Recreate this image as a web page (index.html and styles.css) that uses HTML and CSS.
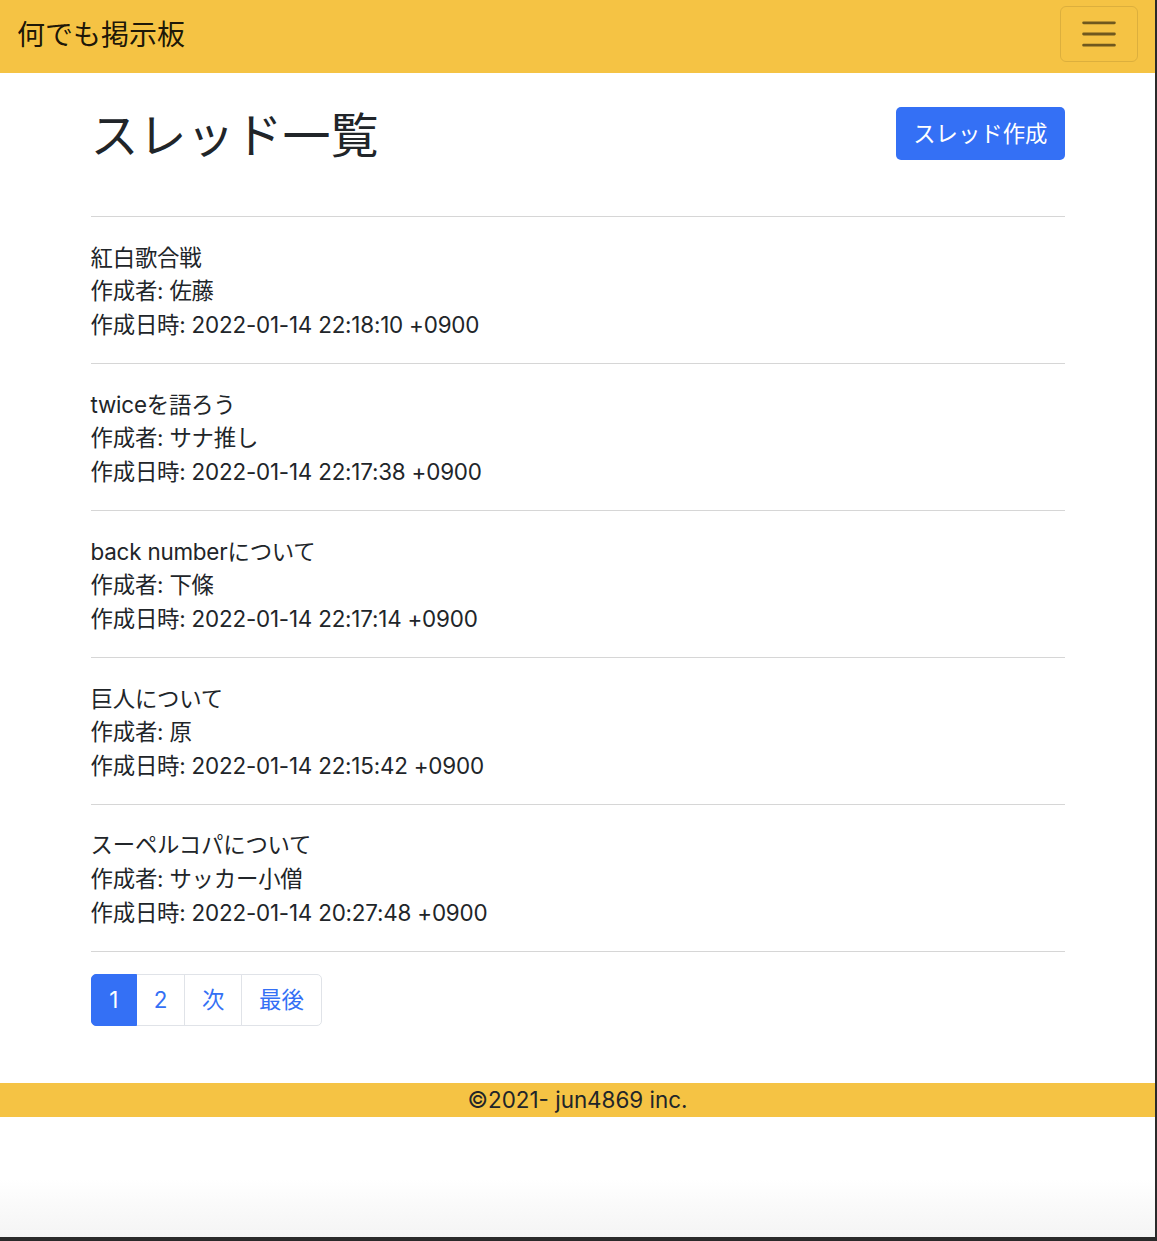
FILE: index.html
```html
<!DOCTYPE html>
<html lang="ja">
<head>
<meta charset="utf-8">
<title>何でも掲示板</title>
<link rel="stylesheet" href="styles.css">
</head>
<body>
<div class="window">
  <nav class="navbar">
    <a class="brand" href="#">何でも掲示板</a>
    <button class="toggler" type="button" aria-label="menu">
      <svg width="42" height="42" viewBox="0 0 30 30"><path d="M4 7h22M4 15h22M4 23h22" stroke="rgba(0,0,0,0.55)" stroke-width="2" stroke-linecap="round" fill="none"/></svg>
    </button>
  </nav>
  <main class="container">
    <div class="head">
      <h1 class="title">スレッド一覧</h1>
      <a class="btn" href="#">スレッド作成</a>
    </div>
    <hr class="sep">
    <div class="thread">
      <div>紅白歌合戦</div>
      <div>作成者: 佐藤</div>
      <div>作成日時: 2022-01-14 22:18:10 +0900</div>
    </div>
    <hr class="sep">
    <div class="thread">
      <div>twiceを語ろう</div>
      <div>作成者: サナ推し</div>
      <div>作成日時: 2022-01-14 22:17:38 +0900</div>
    </div>
    <hr class="sep">
    <div class="thread">
      <div>back numberについて</div>
      <div>作成者: 下條</div>
      <div>作成日時: 2022-01-14 22:17:14 +0900</div>
    </div>
    <hr class="sep">
    <div class="thread">
      <div>巨人について</div>
      <div>作成者: 原</div>
      <div>作成日時: 2022-01-14 22:15:42 +0900</div>
    </div>
    <hr class="sep">
    <div class="thread">
      <div>スーペルコパについて</div>
      <div>作成者: サッカー小僧</div>
      <div>作成日時: 2022-01-14 20:27:48 +0900</div>
    </div>
    <hr class="sep">
    <ul class="pagination">
      <li class="page active"><a href="#">1</a></li>
      <li class="page"><a href="#">2</a></li>
      <li class="page"><a href="#">次</a></li>
      <li class="page last"><a href="#">最後</a></li>
    </ul>
  </main>
  <footer class="footer">©2021- jun4869 inc.</footer>
</div>
</body>
</html>
```
FILE: styles.css
```css
html, body {
  margin: 0;
  padding: 0;
}
body {
  background: #2a2a2a;
  font-family: Inter, "Liberation Sans", "Noto Sans CJK JP", sans-serif;
  color: #212529;
}
.window {
  width: 1155px;
  height: 1237px;
  background: linear-gradient(to bottom, #ffffff 0, #ffffff 1180px, #f4f4f4 1237px);
  overflow: hidden;
}
.navbar {
  height: 73px;
  background: #f5c344;
  display: flex;
  align-items: center;
  justify-content: space-between;
  padding: 0 17px;
}
.brand {
  font-size: 28px;
  line-height: 40px;
  color: rgba(0, 0, 0, 0.9);
  text-decoration: none;
  margin-top: -4px;
}
.toggler {
  width: 78px;
  height: 56px;
  margin-top: -6px;
  background: transparent;
  border: 1.4px solid rgba(0, 0, 0, 0.1);
  border-radius: 6px;
  display: flex;
  align-items: center;
  justify-content: center;
  padding: 0;
}
.container {
  width: 974px;
  margin: 0 auto;
  padding-top: 34px;
}
.head {
  display: flex;
  justify-content: space-between;
  align-items: flex-start;
  margin-bottom: 51px;
}
.title {
  margin: 0;
  font-size: 48px;
  font-weight: 400;
  line-height: 58px;
  color: #212529;
}
.btn {
  display: inline-block;
  background: #3470f5;
  color: #fff;
  text-decoration: none;
  font-size: 22.4px;
  line-height: 33.6px;
  padding: 10px 17px 8px 17px;
  border-radius: 5px;
  height: 35px;
}
.sep {
  border: 0;
  border-top: 1.5px solid #d6d6d6;
  margin: 22.6px 0;
  height: 0;
}
.thread {
  font-size: 22.4px;
  line-height: 33.6px;
  color: #212529;
  letter-spacing: -0.2px;
  padding-top: 1px;
  margin-bottom: -1px;
}
.pagination {
  list-style: none;
  display: flex;
  margin: 0;
  padding: 0;
  margin-top: 2px;
}
.page a {
  display: block;
  font-size: 22.4px;
  line-height: 33.6px;
  padding: 8px 17px 8px 17px;
  color: #3470f5;
  text-decoration: none;
  border: 1.4px solid #e0e3e8;
  margin-left: -1.4px;
  background: #fff;
}
.page.active a {
  padding: 8px 17.8px;
}
.page:first-child a {
  margin-left: 0;
  border-radius: 5px 0 0 5px;
}
.page.last a {
  border-radius: 0 5px 5px 0;
}
.page.active a {
  background: #3470f5;
  border-color: #3470f5;
  color: #fff;
  position: relative;
}
.footer {
  margin-top: 57px;
  height: 33.6px;
  line-height: 33.6px;
  background: #f5c344;
  text-align: center;
  font-size: 22.4px;
  color: #212529;
}
```
